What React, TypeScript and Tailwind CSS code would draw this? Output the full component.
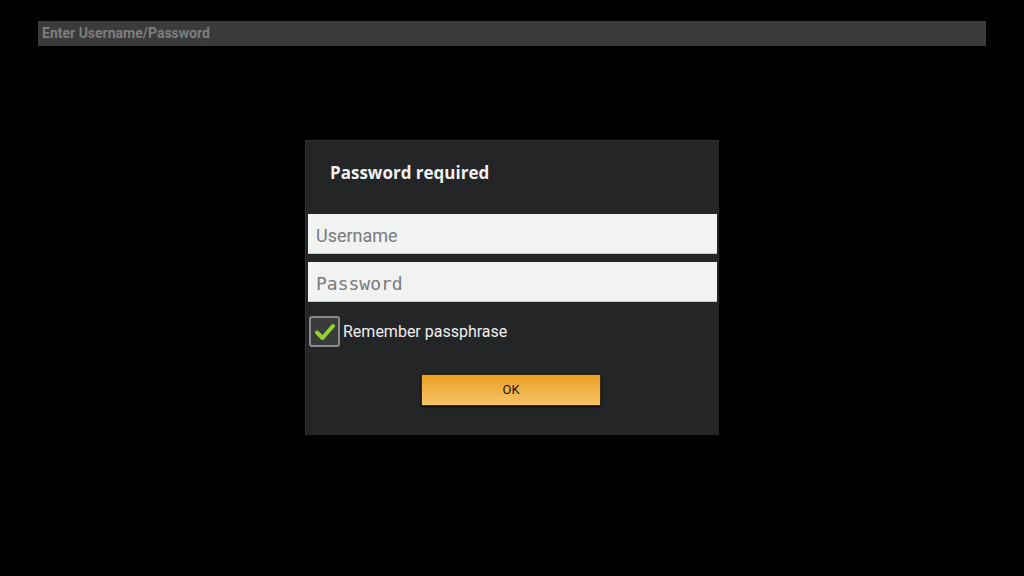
import React from "react";

export default function App() {
  return (
    <div className="w-[1024px] h-[576px] bg-black flex flex-col overflow-hidden" style={{ fontFamily: "Roboto, 'Liberation Sans', sans-serif" }}>
      <div className="pt-[21px] px-[38px]">
        <div className="h-[25px] bg-[#3b3b3b] flex items-center pl-[4px] text-[14px] font-bold text-[#7d7d7d]">
          Enter Username/Password
        </div>
      </div>
      <div className="flex justify-center mt-[94px]">
        <div className="w-[414px] h-[295px] bg-[#242527] border-l border-t border-[#303133] flex flex-col px-[2px]">
          <div className="h-[73px] flex items-center pl-[22px] pb-[9px] text-[17px] font-bold text-[#f2f2f2]" style={{ fontFamily: "'Open Sans', Roboto, sans-serif" }}>
            Password required
          </div>
          <div className="h-[40px] bg-[#f1f2f2] flex items-center pl-[8px] pt-[3px] text-[18px] text-[#7a7a7a] border-b border-[#c8c8c8]">
            Username
          </div>
          <div className="h-[40px] mt-[8px] bg-[#f1f2f2] flex items-center pl-[8px] pt-[3px] text-[18px] text-[#7a7a7a] border-b border-[#c8c8c8]" style={{ fontFamily: "'DejaVu Sans Mono', monospace" }}>
            <span className="text-[18px]">Password</span>
          </div>
          <div className="flex items-center mt-[14px] ml-[1px]">
            <div className="w-[31px] h-[31px] rounded-[3px] border-2 border-[#8a8a8a] bg-[#3a3b3d] flex items-center justify-center">
              <svg width="22" height="18" viewBox="0 0 22 18">
                <path d="M3 9.5 L8.5 15 L19 3" stroke="#8ed62b" strokeWidth="4" fill="none" strokeLinecap="round" strokeLinejoin="round" />
              </svg>
            </div>
            <span className="ml-[3px] text-[16px] text-[#f0f0f0]">Remember passphrase</span>
          </div>
          <div className="flex mt-[27px] ml-[113px]">
            <button className="w-[180px] h-[32px] border border-[#3a2a10] bg-gradient-to-b from-[#eb9f1c] to-[#f6c466] text-[13px] font-normal text-[#1a1208] shadow-[0_1px_2px_rgba(0,0,0,0.8)]">
              OK
            </button>
          </div>
        </div>
      </div>
    </div>
  );
}
